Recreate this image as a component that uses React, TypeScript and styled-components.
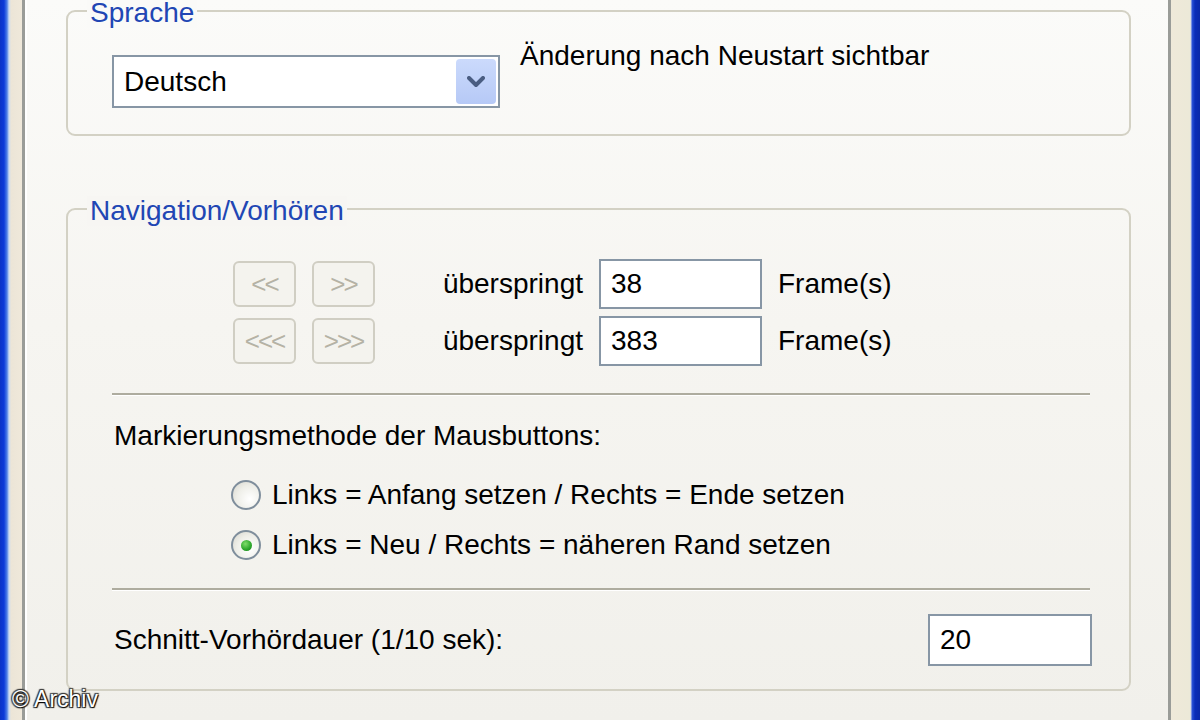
import { Fragment } from "react";
import styled, { createGlobalStyle } from "styled-components";

const GlobalStyle = createGlobalStyle`
  html, body {
    margin: 0;
    padding: 0;
  }
  body {
    font-family: "Liberation Sans", Arial, sans-serif;
    background: #ece9d8;
  }
`;

const Window = styled.div`
  position: relative;
  display: flex;
  width: 1200px;
  height: 720px;
  overflow: hidden;
  font-size: 28px;
  color: #000;
`;

const FrameEdge = styled.div<{ $side: "left" | "right" }>`
  flex-shrink: 0;
  width: ${(p) => (p.$side === "left" ? 22 : 29)}px;
  background: ${(p) =>
    p.$side === "left"
      ? "linear-gradient(90deg, #0a33c6 0, #0b3ad9 4px, #4d7fe6 7px, #c9dbf3 9px, #ece5d7 11px, #efe8da 22px)"
      : "linear-gradient(90deg, #efe9d9 0, #ece9d8 19px, #c3cce9 20px, #2a52d8 21px, #0a2cb8 24px, #0a28a8 29px)"};
`;

const TabPage = styled.div`
  flex: 1;
  border-left: 3px solid #9a9c98;
  border-right: 3px solid #9a9c98;
  box-shadow: inset 2px 0 0 #fff;
  background: linear-gradient(180deg, #fbfbf9 0%, #f6f5f1 45%, #f1f0eb 100%);
  padding: 10px 37px 0 41px;
`;

const GroupBox = styled.section<{ $gap?: number }>`
  position: relative;
  margin-top: ${(p) => p.$gap ?? 0}px;
  border: 2px solid #d3d1c4;
  border-radius: 9px;
`;

const Caption = styled.span<{ $bg: string }>`
  position: absolute;
  top: -14px;
  left: 19px;
  padding: 0 3px;
  line-height: 30px;
  color: #2146b4;
  background: ${(p) => p.$bg};
`;

const LangRow = styled.div`
  display: flex;
  align-items: flex-start;
  gap: 20px;
  padding: 29px 0 26px 44px;
`;

const Dropdown = styled.div`
  box-sizing: border-box;
  display: flex;
  align-items: center;
  justify-content: space-between;
  width: 388px;
  height: 53px;
  margin-top: 14px;
  padding: 0 2px 0 10px;
  border: 2px solid #8796a5;
  background: #fff;
`;

const DropButton = styled.span`
  display: flex;
  align-items: center;
  justify-content: center;
  width: 40px;
  height: 45px;
  border-radius: 4px;
  background: linear-gradient(180deg, #cbdafc 0%, #b6c9f6 100%);
`;

const Text = styled.span`
  line-height: 30px;
  white-space: nowrap;
`;

const NavGrid = styled.div`
  display: grid;
  grid-template-columns: 63px 63px 192px 163px auto;
  grid-auto-rows: 50px;
  column-gap: 16px;
  row-gap: 7px;
  align-items: center;
  margin: 49px 0 0 165px;
`;

const NavButton = styled.button`
  height: 46px;
  padding: 0;
  border: 2px solid #d0cec3;
  border-radius: 6px;
  background: #f4f3ee;
  color: #b5b2a5;
  font-family: "Liberation Sans", Arial, sans-serif;
  font-size: 26px;
  letter-spacing: -2px;
`;

const SkipLabel = styled(Text)`
  justify-self: end;
`;

const TextBox = styled.div<{ $w?: number; $h?: number }>`
  box-sizing: border-box;
  display: flex;
  align-items: center;
  width: ${(p) => p.$w ?? 163}px;
  height: ${(p) => p.$h ?? 50}px;
  padding-left: 10px;
  border: 2px solid #8796a5;
  background: #fff;
`;

const Separator = styled.hr<{ $top: number }>`
  height: 0;
  margin: ${(p) => p.$top}px 39px 0 44px;
  border: 0;
  border-top: 2px solid #aeac9f;
  border-bottom: 1px solid #fff;
`;

const Prompt = styled.div`
  margin: 25px 0 0 46px;
  line-height: 30px;
`;

const RadioList = styled.div`
  display: flex;
  flex-direction: column;
  margin-top: 19px;
  padding-left: 163px;
`;

const RadioRow = styled.label`
  display: flex;
  align-items: center;
  gap: 11px;
  height: 50px;
`;

const RadioCircle = styled.span<{ $checked?: boolean }>`
  box-sizing: border-box;
  display: flex;
  align-items: center;
  justify-content: center;
  width: 30px;
  height: 30px;
  border: 2px solid #7f8e9c;
  border-radius: 50%;
  background: radial-gradient(circle at 65% 65%, #ffffff 0%, #eeeee8 55%, #d6d5cc 100%);

  &::after {
    content: "";
    display: ${(p) => (p.$checked ? "block" : "none")};
    width: 11px;
    height: 11px;
    border-radius: 50%;
    background: radial-gradient(circle at 40% 35%, #7fdc6a 0%, #2aa52a 60%, #1c7f1c 100%);
  }
`;

const DurationRow = styled.div`
  display: flex;
  align-items: center;
  justify-content: space-between;
  padding: 23px 37px 23px 46px;
`;

const Watermark = styled.span`
  position: absolute;
  left: 12px;
  bottom: 8px;
  font-size: 23px;
  line-height: 26px;
  color: #fff;
  text-shadow: 1px 1px 1px #000, -1px -1px 1px #333, 1px -1px 1px #333, -1px 1px 1px #333;
`;

const Chevron = () => (
  <svg width="18" height="12" viewBox="0 0 18 12">
    <polyline
      points="2,2 9,9 16,2"
      fill="none"
      stroke="#4a5d82"
      strokeWidth="4"
      strokeLinecap="round"
      strokeLinejoin="round"
    />
  </svg>
);

const navRows = [
  { back: "<<", fwd: ">>", value: "38" },
  { back: "<<<", fwd: ">>>", value: "383" },
];

const mouseModes = [
  { label: "Links = Anfang setzen / Rechts = Ende setzen", checked: false },
  { label: "Links = Neu / Rechts = näheren Rand setzen", checked: true },
];

export default function App() {
  return (
    <>
      <GlobalStyle />
      <Window>
        <FrameEdge $side="left" />
        <TabPage>
          <GroupBox>
            <Caption $bg="#fafaf8">Sprache</Caption>
            <LangRow>
              <Dropdown>
                <span>Deutsch</span>
                <DropButton>
                  <Chevron />
                </DropButton>
              </Dropdown>
              <Text>Änderung nach Neustart sichtbar</Text>
            </LangRow>
          </GroupBox>

          <GroupBox $gap={72}>
            <Caption $bg="#f7f6f3">Navigation/Vorhören</Caption>
            <NavGrid>
              {navRows.map((row) => (
                <Fragment key={row.value}>
                  <NavButton disabled>{row.back}</NavButton>
                  <NavButton disabled>{row.fwd}</NavButton>
                  <SkipLabel>überspringt</SkipLabel>
                  <TextBox>{row.value}</TextBox>
                  <Text>Frame(s)</Text>
                </Fragment>
              ))}
            </NavGrid>
            <Separator $top={27} />
            <Prompt>Markierungsmethode der Mausbuttons:</Prompt>
            <RadioList>
              {mouseModes.map((m) => (
                <RadioRow key={m.label}>
                  <RadioCircle $checked={m.checked} />
                  <Text>{m.label}</Text>
                </RadioRow>
              ))}
            </RadioList>
            <Separator $top={18} />
            <DurationRow>
              <Text>Schnitt-Vorhördauer (1/10 sek):</Text>
              <TextBox $w={164} $h={52}>
                20
              </TextBox>
            </DurationRow>
          </GroupBox>
        </TabPage>
        <FrameEdge $side="right" />
        <Watermark>© Archiv</Watermark>
      </Window>
    </>
  );
}
